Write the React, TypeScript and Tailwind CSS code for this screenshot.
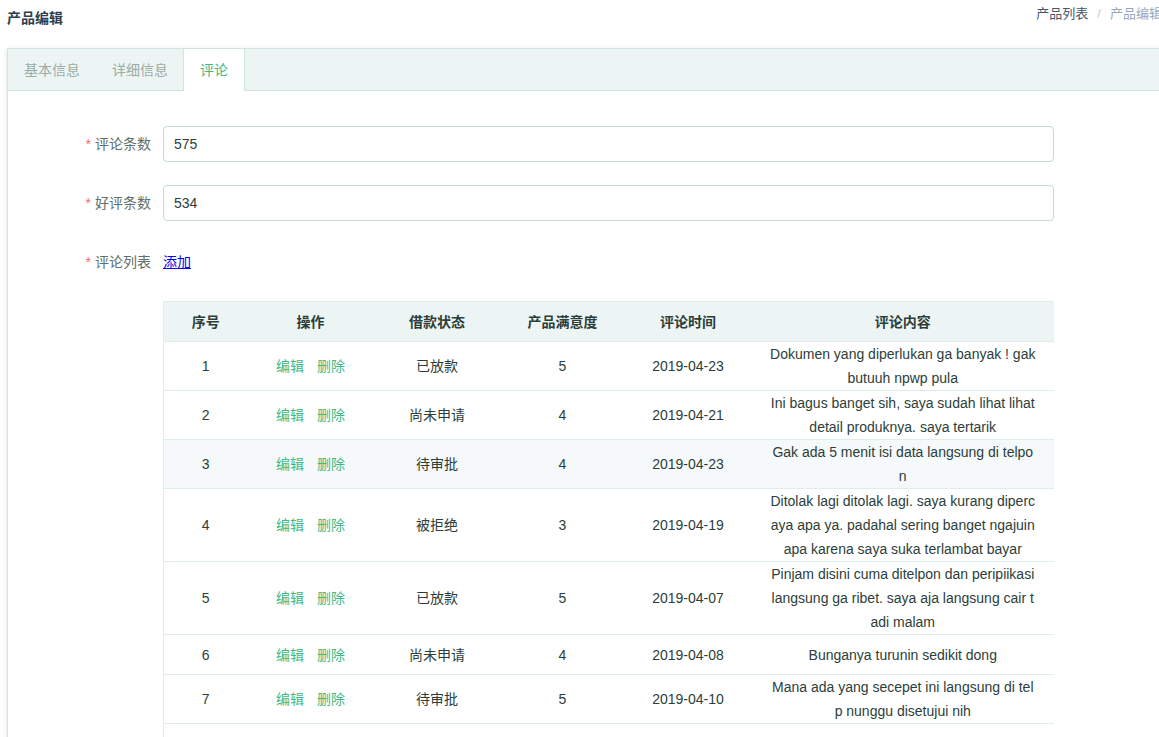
import React from "react";

type Row = {
  id: number;
  status: string;
  score: number;
  date: string;
  content: string;
};

const rows: Row[] = [
  { id: 1, status: "已放款", score: 5, date: "2019-04-23", content: "Dokumen yang diperlukan ga banyak ! gak butuuh npwp pula" },
  { id: 2, status: "尚未申请", score: 4, date: "2019-04-21", content: "Ini bagus banget sih, saya sudah lihat lihat detail produknya. saya tertarik" },
  { id: 3, status: "待审批", score: 4, date: "2019-04-23", content: "Gak ada 5 menit isi data langsung di telpon" },
  { id: 4, status: "被拒绝", score: 3, date: "2019-04-19", content: "Ditolak lagi ditolak lagi. saya kurang dipercaya apa ya. padahal sering banget ngajuin apa karena saya suka terlambat bayar" },
  { id: 5, status: "已放款", score: 5, date: "2019-04-07", content: "Pinjam disini cuma ditelpon dan peripiikasi langsung ga ribet. saya aja langsung cair tadi malam" },
  { id: 6, status: "尚未申请", score: 4, date: "2019-04-08", content: "Bunganya turunin sedikit dong" },
  { id: 7, status: "待审批", score: 5, date: "2019-04-10", content: "Mana ada yang secepet ini langsung di telp nunggu disetujui nih" },
  { id: 8, status: "被拒绝", score: 3, date: "2019-04-12", content: "Prosesnya cepat sekali" },
];

const tabs = ["基本信息", "详细信息", "评论"];

const FormLabel = ({ text }: { text: string }) => (
  <label className="w-[140px] shrink-0 pr-3 text-right text-sm text-[#5f706b]">
    <span className="mr-1 text-[#f56c6c]">*</span>
    {text}
  </label>
);

const App = () => {
  return (
    <div className="h-[737px] w-[1159px] overflow-hidden bg-white font-['Liberation_Sans','Noto_Sans_CJK_SC',sans-serif]">
      <div className="w-[1176px]">
        {/* header */}
        <div className="flex h-[48px] justify-between pl-[7px] pr-[14px]">
          <h1 className="pt-[8px] text-sm leading-5 font-bold text-[#2c3e50]">产品编辑</h1>
          <div className="flex pt-[5px] text-[13px] leading-[18px]">
            <span className="text-[#48576a]">产品列表</span>
            <span className="mx-[9px] text-[#c0ccda]">/</span>
            <span className="text-[#97a8be]">产品编辑</span>
          </div>
        </div>

        {/* card */}
        <div className="ml-[7px] w-[1162px] border border-[#d1e5df] bg-white shadow-[0_1px_5px_rgba(0,0,0,0.12)]">
          <div className="flex h-[42px] border-b border-[#d1e5df] bg-[#ecf5f3]">
            {tabs.map((t, i) =>
              i === 2 ? (
                <div
                  key={t}
                  className="-ml-px mb-[-1px] flex h-[42px] items-center border-x border-[#d1e5df] bg-white px-4 text-sm text-[#42b983]"
                >
                  {t}
                </div>
              ) : (
                <div key={t} className="flex items-center px-4 text-sm text-[#9aaca7]">
                  {t}
                </div>
              )
            )}
          </div>

          <div className="pt-[35px] pl-[15px] pb-10">
            <div className="mb-[23px] flex items-center">
              <FormLabel text="评论条数" />
              <input
                readOnly
                value="575"
                className="h-9 w-[891px] rounded border border-[#c2ddd5] px-[10px] text-sm text-[#2c3e3a] outline-none"
              />
            </div>
            <div className="mb-[23px] flex items-center">
              <FormLabel text="好评条数" />
              <input
                readOnly
                value="534"
                className="h-9 w-[891px] rounded border border-[#c2ddd5] px-[10px] text-sm text-[#2c3e3a] outline-none"
              />
            </div>
            <div className="flex h-9 items-center">
              <FormLabel text="评论列表" />
              <a href="#" className="text-sm text-[#0000ee] underline">
                添加
              </a>
            </div>

            <div className="mt-[21px] ml-[140px] w-[891px]">
              <table className="w-full table-fixed border-collapse border-l border-t border-[#dfeeea] text-center text-sm text-[#2c3e3a]">
                <colgroup>
                  <col className="w-[84px]" />
                  <col className="w-[126px]" />
                  <col className="w-[127px]" />
                  <col className="w-[124px]" />
                  <col className="w-[127px]" />
                  <col />
                </colgroup>
                <thead>
                  <tr className="h-10 border-b border-[#dfeeea] bg-[#ecf5f3]">
                    <th className="font-bold">序号</th>
                    <th className="font-bold">操作</th>
                    <th className="font-bold">借款状态</th>
                    <th className="font-bold">产品满意度</th>
                    <th className="font-bold">评论时间</th>
                    <th className="font-bold">评论内容</th>
                  </tr>
                </thead>
                <tbody>
                  {rows.map((r) => (
                    <tr
                      key={r.id}
                      className={
                        r.id === 3
                          ? "h-10 border-b border-[#dfeeea] bg-[#f5f9f9]"
                          : "h-10 border-b border-[#dfeeea]"
                      }
                    >
                      <td className="leading-6">{r.id}</td>
                      <td className="leading-6">
                        <span className="text-[#42b983]">编辑</span>
                        <span className="ml-[13px] text-[#42b983]">删除</span>
                      </td>
                      <td className="leading-6">{r.status}</td>
                      <td className="leading-6">{r.score}</td>
                      <td className="leading-6">{r.date}</td>
                      <td className="px-[18px] leading-6 break-all">{r.content}</td>
                    </tr>
                  ))}
                </tbody>
              </table>
            </div>
          </div>
        </div>
      </div>
    </div>
  );
};

export default App;
